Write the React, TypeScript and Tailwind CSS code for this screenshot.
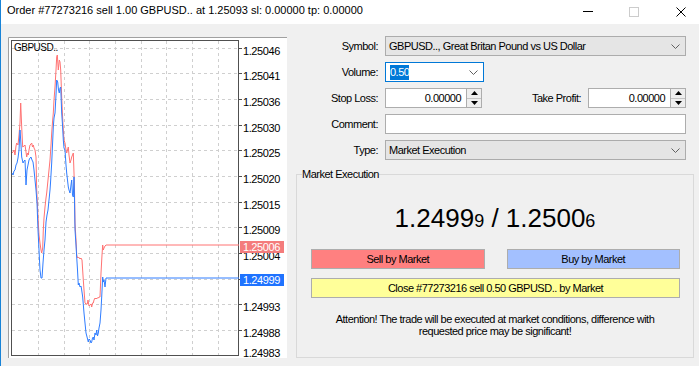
import React from 'react';

const BLUE =
  '12,173 13,175 14,171 15,170 16,165 17,163 18,158 19,150 20,130 20.7,140 21.7,157 23,163 24,161 25,160 26,185 27,170 28,165 29,160 30,158 31,157 32,160 33,162 34,170 35,180 36,190 37,203 38,230 39,250 40,270 41,278 42,278 43,263 44,250 45,240 46,222 47,215 48,210 49,200 50,190 50.5,183 51.7,163 52.5,145 53.3,127 54,118 55,113 56,95 56.7,80 57.7,82 58.5,90 59.3,93 60,88 60.7,87 61.7,113 62.5,125 63.3,140 64,148 65,150 66,165 66.7,173 67.5,180 68.3,187 69,190 70,193 71,185 71.7,180 72.5,195 73.3,197 74,177 74.5,200 75,230 76,245 76.7,257 77.5,270 78.3,285 79,283 80,287 81,286 81.7,290 82.7,297 84,313 85,323 86,333 87.3,338 88.3,342 89,339 90,340 91,343 91.7,342 92.5,338 93.3,337 94,340 95,333 96,335 96.7,330 97.5,336 98.3,333 99,328 100,323 101,310 101.7,297 102.7,277 103.3,282 104,280 105,287 106,278 107,278 239,278';

const RED =
  '12,153 13,152 14,150 15,155 16,146 16.7,143 18,145 19,135 20,123 20.7,103 21.2,115 21.7,127 22.7,147 24,146 25,145 26,152 26.7,157 27.5,153 28.3,155 29,150 30,145 31,144 31.7,143 32.5,147 33.3,145 34,148 35,150 36,157 36.7,190 37.5,205 38.3,223 39,235 40,243 41,250 41.7,253 42.7,248 43.3,230 44,218 45,207 46,198 46.7,193 47.5,185 48.3,177 49,170 50,160 51,145 51.7,133 52.5,122 53.3,113 54,100 55,87 56,70 56.7,57 57.3,55 58.3,70 59.3,60 60,62 60.7,70 61.7,97 62.5,115 63.3,130 64,140 65,143 66,150 66.7,153 67.5,150 68.3,147 69,155 70,163 71,160 71.7,157 72.5,155 73.3,153 74,173 74.5,190 75,223 76,240 76.7,255 77.5,258 78.5,257 80,259 81,258 82,260 83.3,280 84,290 85,303 86,304 87.3,304 88,300 89,306 90,305 91,304 91.7,307 92.5,303 93.3,303 94,300 95,298 96,299 97,298 98.3,298 99,297 100,297 101,273 102,255 102.7,245 103.3,250 104,248 105,246 106,245 239,245';

const LABELS = ['1.25046', '1.25041', '1.25036', '1.25030', '1.25025', '1.25020', '1.25015', '1.25009', '1.25004', '1.24999', '1.24993', '1.24988'];
const H_GRID = LABELS.map((_, i) => Math.round(47.8 + 25.65 * i) + 0.5);
const V_GRID = Array.from({ length: 8 }, (_, i) => Math.round(38 + 25.65 * i) + 0.5);

function Chart() {
  return (
    <div className="w-[279px] h-[321px] mt-[1px] shrink-0">
      <svg width="279" height="321" viewBox="8 37 279 321" className="block font-['Liberation_Sans',Arial,sans-serif]">
        <rect x="8" y="37" width="279" height="321" fill="#ffffff" />
        <path d="M8.5 358 V37.5 H287" stroke="#a0a0a0" fill="none" />
        {H_GRID.map((y) => (
          <line key={'h' + y} x1="12" x2="238" y1={y} y2={y} stroke="#cfcfcf" strokeDasharray="3 3" />
        ))}
        {V_GRID.map((x) => (
          <line key={'v' + x} x1={x} x2={x} y1="41" y2="355" stroke="#cfcfcf" strokeDasharray="3 3" />
        ))}
        <rect x="11.5" y="40.5" width="227" height="315" fill="none" stroke="#505050" />
        {H_GRID.map((y) => (
          <line key={'t' + y} x1="239" x2="242" y1={y} y2={y} stroke="#505050" />
        ))}
        <text x="14" y="51" fontSize="10" letterSpacing="-0.5" fill="#000">GBPUSD..</text>
        {LABELS.map((l, i) => (
          <text key={l} x="243" y={H_GRID[i] + 6} fontSize="11" letterSpacing="-0.4" fill="#000">{l}</text>
        ))}
        <text x="243" y="357" fontSize="11" letterSpacing="-0.4" fill="#000">1.24983</text>
        <polyline points={RED} fill="none" stroke="#ff7272" strokeWidth="1" />
        <polyline points={BLUE} fill="none" stroke="#2f7dff" strokeWidth="1" />
        <rect x="240" y="241" width="44" height="12" fill="#f47c7c" />
        <text x="243" y="251" fontSize="11" letterSpacing="-0.4" fill="#ffffff">1.25006</text>
        <rect x="240" y="274" width="44" height="12" fill="#1f73ff" />
        <text x="243" y="284" fontSize="11" letterSpacing="-0.4" fill="#ffffff">1.24999</text>
      </svg>
    </div>
  );
}

function Chevron() {
  return (
    <svg width="9" height="5" viewBox="0 0 9 5" className="block">
      <path d="M0.5 0.5 L4.5 4.5 L8.5 0.5" stroke="#606060" fill="none" />
    </svg>
  );
}

function Combo({ text }: { text: string }) {
  return (
    <div className="h-[20px] flex items-center justify-between border border-[#acacac] bg-[#e5e5e5] pl-[3px] pr-[5px]">
      <span>{text}</span>
      <Chevron />
    </div>
  );
}

function Spinner() {
  return (
    <div className="w-[15px] h-full flex flex-col border-l border-[#adadad] bg-[#eeeeee]">
      <div className="flex-1 flex items-center justify-center border-b border-[#c4c4c4]">
        <svg width="7" height="4" viewBox="0 0 7 4" className="block">
          <polygon points="3.5,0 7,4 0,4" fill="#000" />
        </svg>
      </div>
      <div className="flex-1 flex items-center justify-center">
        <svg width="7" height="4" viewBox="0 0 7 4" className="block">
          <polygon points="0,0 7,0 3.5,4" fill="#000" />
        </svg>
      </div>
    </div>
  );
}

function NumField({ w }: { w: string }) {
  return (
    <div className={`${w} h-[20px] flex border border-[#adadad] bg-white`}>
      <div className="flex-1 flex items-center justify-end pr-[5px]">0.00000</div>
      <Spinner />
    </div>
  );
}

export default function App() {
  return (
    <div className="w-[699px] h-[366px] overflow-hidden bg-[#f0f0f0] border-l border-[#1883d7] flex flex-col text-[11px] tracking-[-0.5px] text-black font-['Liberation_Sans',Arial,sans-serif]">
      <div className="h-[24px] bg-white flex items-start shrink-0">
        <div className="pl-[6px] pt-[4px] leading-[13px] tracking-normal">
          Order #77273216 sell 1.00 GBPUSD.. at 1.25093 sl: 0.00000 tp: 0.00000
        </div>
        <div className="ml-auto flex h-full">
          <div className="w-[46px] flex items-center justify-center">
            <div className="w-[10px] h-px bg-black mt-[-2px]" />
          </div>
          <div className="w-[46px] flex items-center justify-center">
            <div className="w-[10px] h-[10px] border border-[#cccccc] mt-[-1px]" />
          </div>
          <div className="w-[42px] flex items-center justify-end pr-[13px]">
            <svg width="10" height="10" viewBox="0 0 10 10" className="block mt-[-1px]">
              <path d="M0.5 0.5 L9.5 9.5 M9.5 0.5 L0.5 9.5" stroke="#000" fill="none" />
            </svg>
          </div>
        </div>
      </div>

      <div className="flex pl-[7px] pt-[12px]">
        <Chart />

        <div className="ml-[9px] w-[398px] flex flex-col">
          <div className="grid grid-cols-[82px_301px] gap-x-[7px] gap-y-[6px] leading-[13px]">
            <div className="h-[20px] flex items-center justify-end">Symbol:</div>
            <Combo text="GBPUSD.., Great Britan Pound vs US Dollar" />

            <div className="h-[20px] flex items-center justify-end">Volume:</div>
            <div className="w-[99px] h-[20px] flex items-center justify-between border border-[#0078d7] bg-white pl-[4px] pr-[5px]">
              <span className="bg-[#0078d7] text-white leading-[15px]">0.50</span>
              <Chevron />
            </div>

            <div className="h-[20px] flex items-center justify-end">Stop Loss:</div>
            <div className="flex items-center">
              <NumField w="w-[97px]" />
              <div className="flex-1 text-right pr-[7px]">Take Profit:</div>
              <NumField w="w-[98px]" />
            </div>

            <div className="h-[20px] flex items-center justify-end">Comment:</div>
            <div className="h-[20px] border border-[#adadad] bg-white" />

            <div className="h-[20px] flex items-center justify-end">Type:</div>
            <Combo text="Market Execution" />
          </div>

          <fieldset className="mt-[8px] border border-[#d9d9d9] pb-[20px] leading-[13px]">
            <legend className="ml-[5px]">Market Execution</legend>
            <div className="mt-[22px] h-[30px] flex items-baseline justify-center leading-[30px] tracking-normal text-[26px]">
              <span>1.2499</span>
              <span className="text-[18px]">9</span>
              <span className="whitespace-pre"> / 1.2500</span>
              <span className="text-[18px]">6</span>
            </div>
            <div className="mt-[16px] pl-[14px] pr-[13px] grid grid-cols-2 gap-x-[22px]">
              <button className="h-[20px] border border-[#adadad] bg-[#ff8080] flex items-center justify-center">Sell by Market</button>
              <button className="h-[20px] border border-[#adadad] bg-[#a3c0ff] flex items-center justify-center">Buy by Market</button>
            </div>
            <div className="mt-[9px] pl-[14px] pr-[13px]">
              <button className="w-full h-[20px] border border-[#adadad] bg-[#ffff99] flex items-center justify-center">
                Close #77273216 sell 0.50 GBPUSD.. by Market
              </button>
            </div>
            <p className="mt-[15px] text-center leading-[12px]">
              Attention! The trade will be executed at market conditions, difference with
              <br />
              requested price may be significant!
            </p>
          </fieldset>
        </div>
      </div>
    </div>
  );
}
